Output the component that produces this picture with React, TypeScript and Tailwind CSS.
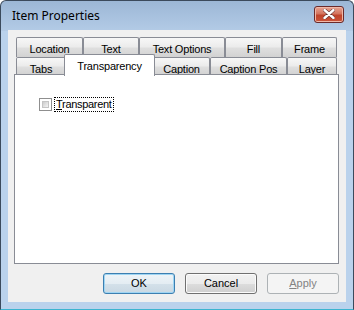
import React from 'react';

const tabFont = { fontFamily: '"Liberation Sans", Arial, sans-serif' };

const backRow = [
  { label: 'Location', w: 67 },
  { label: 'Text', w: 56 },
  { label: 'Text Options', w: 86 },
  { label: 'Fill', w: 57 },
  { label: 'Frame', w: 55 },
];

const frontRow = [
  { label: 'Tabs', w: 50 },
  { label: 'Transparency', w: 87, active: true },
  { label: 'Caption', w: 57 },
  { label: 'Caption Pos', w: 77 },
  { label: 'Layer', w: 50 },
];

const tabBg =
  'bg-[linear-gradient(#f7f7f7,#ececec_45%,#dedede_55%,#d2d2d2)] border border-b-0 border-[#898c95] rounded-t-[2px]';

const Tab = ({ label, w, active }: { label: string; w: number; active?: boolean }) => {
  if (active) {
    return (
      <div
        className="relative z-10 -mx-[2px] -mt-[3px] h-[22px] bg-white border border-b-0 border-[#898c95] rounded-t-[2px] flex justify-center pt-[3px] text-[11px] tracking-[-0.2px] text-black"
        style={{ width: w + 4 }}
      >
        {label}
      </div>
    );
  }
  return (
    <div
      className={`${tabBg} h-full flex justify-center pt-[3px] text-[11px] tracking-[-0.2px] text-black`}
      style={{ width: w }}
    >
      {label}
    </div>
  );
};

const Button = ({
  children,
  variant,
}: {
  children: React.ReactNode;
  variant: 'default' | 'normal' | 'disabled';
}) => {
  const styles = {
    default:
      'border-[#3c7fb1] bg-[linear-gradient(#eef4f8,#e4edf3_50%,#d4e1ea_50%,#c9d8e3)] shadow-[inset_0_0_0_1px_#9fd5f3] text-black',
    normal:
      'border-[#707070] bg-[linear-gradient(#f2f2f2,#ebebeb_50%,#dddddd_50%,#cfcfcf)] shadow-[inset_0_0_0_1px_#fbfbfb] text-black',
    disabled: 'border-[#adb2b5] bg-[#f4f4f4] text-[#838383]',
  }[variant];
  return (
    <div
      className={`w-[72px] h-[21px] border rounded-[3px] flex items-center justify-center text-[11px] ${styles}`}
    >
      {children}
    </div>
  );
};

export default function App() {
  return (
    <div className="w-[354px] h-[310px] bg-white" style={tabFont}>
      <div className="w-[354px] h-[310px] flex flex-col rounded-t-[6px] border border-[#3b4a5c] border-b-[#3cb4cf] bg-[linear-gradient(#9cb7d6,#b3cbe6_30px,#bad2ec_30px)] px-[7px] pb-[7px]">
        {/* title bar */}
        <div className="h-[29px] flex items-center justify-between shrink-0">
          <span
            className="pl-[4px] pt-[1px] text-[12px] text-black"
            style={{ fontFamily: '"Noto Sans", "Open Sans", sans-serif' }}
          >
            Item Properties
          </span>
          <div className="mr-[2px] mb-[3px] w-[30px] h-[17px] rounded-[3px] border border-[#6b2a2a] bg-[linear-gradient(#e8a493,#d3745e_45%,#c0442b_55%,#c9543a)] shadow-[inset_0_0_0_1px_#f0b8a8] flex items-center justify-center">
            <svg width="12" height="10" viewBox="0 0 12 10">
              <path
                d="M1.5 1 L10.5 9 M10.5 1 L1.5 9"
                stroke="#5a2a2a"
                strokeWidth="3.6"
                strokeLinecap="round"
              />
              <path
                d="M1.5 1 L10.5 9 M10.5 1 L1.5 9"
                stroke="#ffffff"
                strokeWidth="2.4"
                strokeLinecap="round"
              />
            </svg>
          </div>
        </div>

        {/* client area */}
        <div className="flex-1 bg-[#f0f0f0] flex flex-col px-[6px] pt-[7px]">
          <div className="flex flex-col">
            <div className="flex h-[20px] pl-[2px]">
              {backRow.map((t) => (
                <Tab key={t.label} {...t} />
              ))}
            </div>
            <div className="flex h-[18px] pl-[2px] items-start">
              {frontRow.map((t) => (
                <Tab key={t.label} {...t} />
              ))}
            </div>
            <div className="relative -mt-px h-[190px] w-[325px] bg-white border border-[#898c95]">
              <div className="flex items-center pl-[24px] pt-[22px]">
                <div className="w-[13px] h-[13px] border border-[#8f8f8f] bg-white p-[2px]">
                  <div className="w-full h-full border border-[#c4c4c4] bg-[linear-gradient(135deg,#cbcbcb,#f4f4f4)]" />
                </div>
                <div className="ml-[2px] px-[1px] h-[15px] flex items-center border border-dotted border-black text-[11px] tracking-[-0.3px] text-black">
                  <span>
                    <span className="underline">T</span>ransparent
                  </span>
                </div>
              </div>
            </div>
          </div>

          <div className="flex justify-end gap-[10px] pr-[1px] pt-[9px]">
            <Button variant="default">OK</Button>
            <Button variant="normal">Cancel</Button>
            <Button variant="disabled">
              <span>
                <span className="underline">A</span>pply
              </span>
            </Button>
          </div>
        </div>
      </div>
    </div>
  );
}
